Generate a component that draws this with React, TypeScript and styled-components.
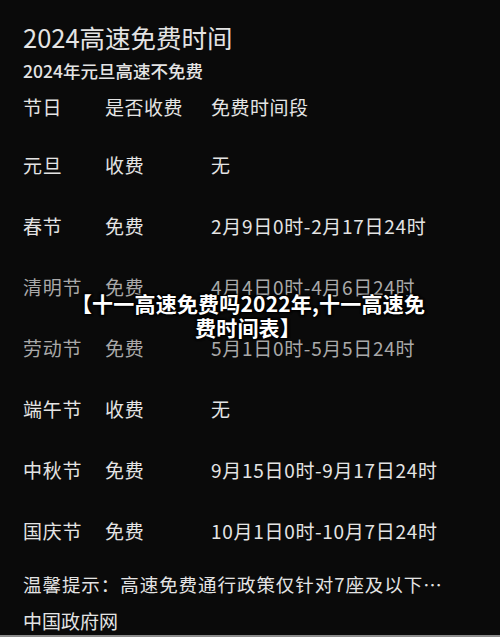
import { createGlobalStyle } from "styled-components";
import styled from "styled-components";

const GlobalStyle = createGlobalStyle`
  html, body {
    margin: 0;
    padding: 0;
    background: #0a0a0a;
  }
  * {
    box-sizing: border-box;
  }
`;

const Page = styled.div`
  position: relative;
  width: 500px;
  height: 637px;
  background: #0a0a0a;
  border-bottom: 2px solid #8c8c8c;
  padding: 22px 0 0 23px;
  font-family: "Noto Sans CJK SC", "Noto Sans", sans-serif;
  color: #e4e4e4;
  overflow: hidden;
`;

const Title = styled.div`
  font-size: 25.5px;
  line-height: 30px;
  height: 30px;
`;

const Subtitle = styled.div`
  font-size: 17.5px;
  line-height: 24px;
  height: 24px;
  margin-top: 7px;
  font-weight: 500;
`;

const Table = styled.div`
  display: flex;
  flex-direction: column;
  margin-top: 12px;
`;

const HeaderRow = styled.div`
  display: grid;
  grid-template-columns: 82px 106px 1fr;
  font-size: 19px;
  letter-spacing: 0.5px;
  line-height: 24px;
  height: 24px;
  margin-bottom: 15.5px;
`;

const Row = styled.div<{ $dim?: boolean }>`
  display: grid;
  grid-template-columns: 82px 106px 1fr;
  align-items: center;
  height: 61px;
  font-size: 19px;
  letter-spacing: 0.7px;
  line-height: 24px;
  white-space: nowrap;
  color: ${(p) => (p.$dim ? "#a9a9a9" : "#e4e4e4")};
`;

const Note = styled.div`
  font-size: 18.5px;
  letter-spacing: 0.95px;
  line-height: 24px;
  height: 24px;
  margin-top: 10.5px;
  white-space: nowrap;
`;

const Source = styled.div`
  font-size: 19px;
  line-height: 24px;
  height: 24px;
  margin-top: 13px;
`;

const Overlay = styled.div`
  position: absolute;
  left: 70px;
  top: 291px;
  width: 356px;
  text-align: center;
  font-size: 21px;
  letter-spacing: 0.2px;
  line-height: 24px;
  font-weight: 700;
  color: #ffffff;
  text-shadow: 0 0 2px #000, 0 0 3px #000, 1px 1px 2px #000, -1px -1px 2px #000;
`;

const rows = [
  { name: "元旦", fee: "收费", time: "无" },
  { name: "春节", fee: "免费", time: "2月9日0时-2月17日24时" },
  { name: "清明节", fee: "免费", time: "4月4日0时-4月6日24时", dim: true },
  { name: "劳动节", fee: "免费", time: "5月1日0时-5月5日24时", dim: true },
  { name: "端午节", fee: "收费", time: "无" },
  { name: "中秋节", fee: "免费", time: "9月15日0时-9月17日24时" },
  { name: "国庆节", fee: "免费", time: "10月1日0时-10月7日24时" },
];

export default function App() {
  return (
    <>
      <GlobalStyle />
      <Page>
        <Title>2024高速免费时间</Title>
        <Subtitle>2024年元旦高速不免费</Subtitle>
        <Table>
          <HeaderRow>
            <span>节日</span>
            <span>是否收费</span>
            <span>免费时间段</span>
          </HeaderRow>
          {rows.map((r, i) => (
            <Row key={i} $dim={r.dim}>
              <span>{r.name}</span>
              <span>{r.fee}</span>
              <span>{r.time}</span>
            </Row>
          ))}
        </Table>
        <Note>温馨提示：高速免费通行政策仅针对7座及以下…</Note>
        <Source>中国政府网</Source>
        <Overlay>【十一高速免费吗2022年,十一高速免费时间表】</Overlay>
      </Page>
    </>
  );
}
